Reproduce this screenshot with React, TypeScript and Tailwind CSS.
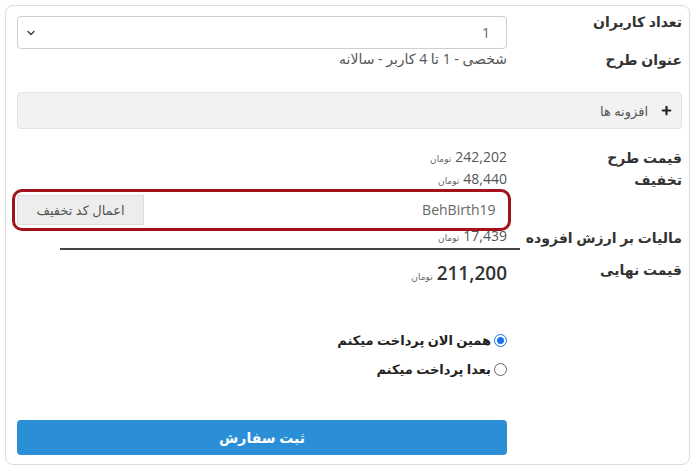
import React, { useState } from 'react';
import { ChevronDown, Plus } from 'lucide-react';

const font = { fontFamily: '"Open Sans", "DejaVu Sans", sans-serif' };

const Toman: React.FC<{ amount: string; big?: boolean }> = ({ amount, big }) => (
  <span className="inline-flex items-baseline gap-1">
    <span className={big ? 'text-[19px] font-semibold text-[#333]' : 'text-[14px] text-[#555]'}>{amount}</span>
    <span className="text-[9px] text-[#666]">تومان</span>
  </span>
);

export default function App() {
  const [payNow, setPayNow] = useState(true);

  return (
    <div dir="rtl" className="h-[470px] w-[700px] bg-white p-[5px] pr-[10px] leading-[20px]" style={font}>
      <div className="h-[460px] rounded-[8px] border border-[#dcdcdc] pl-[11px] pr-[7px] pt-[10px]">
        {/* users count */}
        <div className="flex h-[33px] items-start">
          <div className="-mt-[4px] w-[162px] text-[14px] font-semibold text-[#333]">تعداد کاربران</div>
          <div className="mr-[13px] flex h-[33px] w-[490px] items-center justify-between rounded-[4px] border border-[#cfcfcf] bg-white pl-[7px] pr-[16px]">
            <span className="text-[14px] text-[#666]">1</span>
            <ChevronDown size={12} strokeWidth={3} className="text-[#444]" />
          </div>
        </div>

        {/* plan title */}
        <div className="flex h-[20px]">
          <div className="mt-[1px] w-[162px] text-[14px] font-semibold text-[#333]">عنوان طرح</div>
          <div className="mr-[13px] text-[14px] text-[#555]">شخصی - 1 تا 4 کاربر - سالانه</div>
        </div>

        {/* addons */}
        <div className="mt-[23px] flex h-[37px] items-center gap-[12px] rounded-[4px] border border-[#e2e2e2] bg-[#f2f2f2] pr-[8px]">
          <Plus size={13} strokeWidth={4} className="text-[#222]" />
          <span className="text-[13px] text-[#555]">افزونه ها</span>
        </div>

        {/* prices */}
        <div className="mt-[18px] flex h-[44px] leading-[22px]">
          <div className="w-[162px] text-[14px] font-semibold text-[#333]">
            <div>قیمت طرح</div>
            <div>تخفیف</div>
          </div>
          <div className="mr-[13px]">
            <div className="flex h-[22px] items-center"><Toman amount="242,202" /></div>
            <div className="flex h-[21px] items-center"><Toman amount="48,440" /></div>
          </div>
        </div>

        {/* discount code */}
        <div className="mt-[4px] flex h-[30px]">
          <div className="w-[162px]" />
          <div className="relative mr-[13px] flex h-[30px] w-[492px]">
            <div className="flex flex-1 items-center bg-white pr-[12px] text-[14px] text-[#666]">
              <span dir="ltr">BehBirth19</span>
            </div>
            <div className="flex w-[127px] items-center justify-center border border-[#dcdcdc] bg-[#ededed] text-[13px] text-[#555]">
              اعمال کد تخفیف
            </div>
            <div className="pointer-events-none absolute -bottom-[6px] -left-[5px] -right-[3px] -top-[6px] rounded-[10px] border-[3px] border-[#a3111a]" />
          </div>
        </div>

        {/* tax */}
        <div className="mt-[2px] flex h-[20px]">
          <div className="mt-[1px] w-[162px] text-[14px] font-semibold text-[#333]">مالیات بر ارزش افزوده</div>
          <div className="mr-[13px] flex h-[20px] items-center"><Toman amount="17,439" /></div>
        </div>
        <div className="ml-[43px] mr-[162px] mt-[1px] h-[2px] bg-[#444]" />

        {/* final */}
        <div className="mt-[8px] flex h-[24px] items-start leading-[24px]">
          <div className="w-[162px] text-[14px] font-semibold text-[#333]">قیمت نهایی</div>
          <div className="mr-[13px] mt-[3px]"><Toman amount="211,200" big /></div>
        </div>

        {/* payment options */}
        <div className="mr-[162px] mt-[47px] flex flex-col gap-[7px] pr-[13px] leading-[22px]">
          {[
            { label: 'همین الان پرداخت میکنم', value: true },
            { label: 'بعدا پرداخت میکنم', value: false },
          ].map((o) => (
            <button
              key={o.label}
              onClick={() => setPayNow(o.value)}
              className="flex h-[22px] items-center gap-[3px] text-[13px] font-semibold text-[#222]"
            >
              {payNow === o.value ? (
                <span className="flex h-[13px] w-[13px] items-center justify-center rounded-full border-[1.5px] border-[#1a73e8] bg-white">
                  <span className="h-[7px] w-[7px] rounded-full bg-[#1a73e8]" />
                </span>
              ) : (
                <span className="h-[13px] w-[13px] rounded-full border border-[#666] bg-white" />
              )}
              <span>{o.label}</span>
            </button>
          ))}
        </div>

        {/* submit */}
        <div className="mr-[175px] mt-[40px] flex h-[35px] w-[490px] items-center justify-center rounded-[4px] bg-[#2b8fd8] text-[14px] font-semibold text-white">
          ثبت سفارش
        </div>
      </div>
    </div>
  );
}
